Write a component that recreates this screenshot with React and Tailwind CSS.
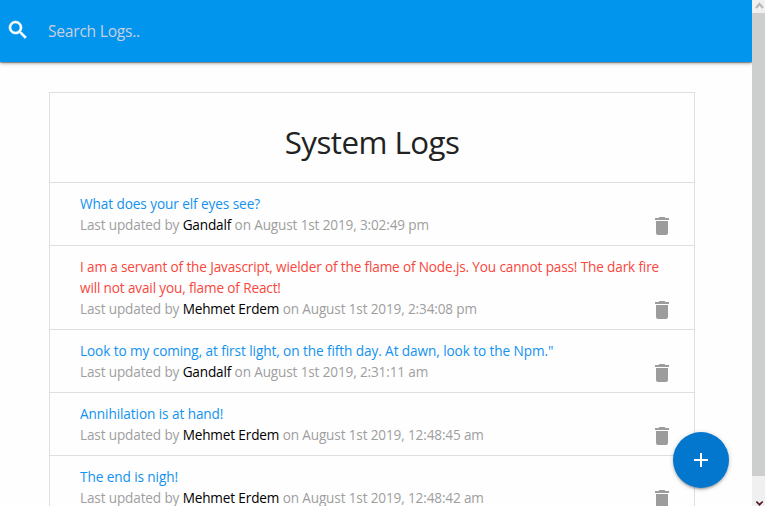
import React from 'react';

const logs = [
  { message: 'What does your elf eyes see?', tech: 'Gandalf', date: 'August 1st 2019, 3:02:49 pm' },
  {
    message:
      'I am a servant of the Javascript, wielder of the flame of Node.js. You cannot pass! The dark fire will not avail you, flame of React!',
    tech: 'Mehmet Erdem',
    date: 'August 1st 2019, 2:34:08 pm',
    attention: true,
  },
  {
    message: 'Look to my coming, at first light, on the fifth day. At dawn, look to the Npm."',
    tech: 'Gandalf',
    date: 'August 1st 2019, 2:31:11 am',
  },
  { message: 'Annihilation is at hand!', tech: 'Mehmet Erdem', date: 'August 1st 2019, 12:48:45 am' },
  { message: 'The end is nigh!', tech: 'Mehmet Erdem', date: 'August 1st 2019, 12:48:42 am' },
];

function SearchBar() {
  return (
    <nav className="relative z-10 flex h-[62px] shrink-0 items-center bg-[#0295ee] pl-1.5 shadow-[0_2px_2px_0_rgba(0,0,0,0.14),0_3px_1px_-2px_rgba(0,0,0,0.12),0_1px_5px_0_rgba(0,0,0,0.2),0_1px_0_0_rgba(0,0,0,0.2)]">
      <svg className="mb-0.5 size-6 fill-white stroke-white" strokeWidth="0.6" viewBox="0 0 24 24">
        <path d="M15.5 14h-.79l-.28-.27A6.47 6.47 0 0 0 16 9.5 6.5 6.5 0 1 0 9.5 16c1.61 0 3.09-.59 4.23-1.57l.27.28v.79l5 4.99L20.49 19l-4.99-5zm-6 0a4.5 4.5 0 1 1 0-9 4.5 4.5 0 0 1 0 9z" />
      </svg>
      <span className="ml-[18px] pt-0.5 text-[15.6px] tracking-[-0.24px] text-[#c9cfe0]">Search Logs..</span>
    </nav>
  );
}

function LogItem({ log }) {
  return (
    <li className="flex items-end border-b border-[#dfdfdf] py-2.5 pr-5 pl-[30px]">
      <div className="-mr-3 flex-1 text-[13.6px] leading-[21px]">
        <p className={log.attention ? 'tracking-[-0.15px] text-[#f8473d]' : 'tracking-[-0.08px] text-[#1292ee]'}>
          {log.message}
        </p>
        <p className="tracking-[-0.15px] text-[#9e9e9e]">
          Last updated by <span className="text-black">{log.tech}</span> on {log.date}
        </p>
      </div>
      <svg className="-mb-[3px] size-6 shrink-0 fill-[#9c9c9c]" viewBox="0 0 24 24">
        <path d="M6 19c0 1.1.9 2 2 2h8c1.1 0 2-.9 2-2V7H6v12zM19 4h-3.5l-1-1h-5l-1 1H5v2h14V4z" />
      </svg>
    </li>
  );
}

function Scrollbar() {
  return (
    <div className="flex w-[13px] shrink-0 flex-col bg-[#f0f0f0]">
      <svg className="h-[13px] w-[13px]" viewBox="0 0 13 13">
        <path d="M4 8 7.5 4 11 8" fill="none" stroke="#b8b8b8" strokeWidth="2.2" />
      </svg>
      <div className="h-[463px] bg-[#cdcece]" />
      <svg className="mt-auto h-[9px] w-[13px]" viewBox="0 0 13 9">
        <path d="M4.3 4.5 7.5 7.7 10.7 4.5" fill="none" stroke="#501820" strokeWidth="1.7" />
      </svg>
    </div>
  );
}

export default function App() {
  return (
    <div className="relative flex h-[506px] w-[765px] overflow-hidden bg-[#fefefe] font-['Open_Sans','Noto_Sans',sans-serif]">
      <main className="flex min-w-0 flex-1 flex-col overflow-hidden">
        <SearchBar />
        <ul className="mt-[30px] ml-[49px] w-[646px] shrink-0 border border-[#dfdfdf]">
          <li className="flex h-[90px] items-center justify-center border-b border-[#dfdfdf] pt-2">
            <h4 className="text-[31.3px] leading-[38px] tracking-[-0.55px] text-[#222]">System Logs</h4>
          </li>
          {logs.map((log) => (
            <LogItem key={log.date} log={log} />
          ))}
        </ul>
      </main>
      <Scrollbar />
      <button className="absolute top-[432px] left-[673px] z-20 flex size-14 items-center justify-center rounded-full bg-[#0277cd] shadow-[0_2px_2px_0_rgba(0,0,0,0.14),0_3px_1px_-2px_rgba(0,0,0,0.12),0_1px_5px_0_rgba(0,0,0,0.2)]">
        <svg className="size-6 fill-white" viewBox="0 0 24 24">
          <path d="M19 13h-6v6h-2v-6H5v-2h6V5h2v6h6v2z" />
        </svg>
      </button>
    </div>
  );
}
